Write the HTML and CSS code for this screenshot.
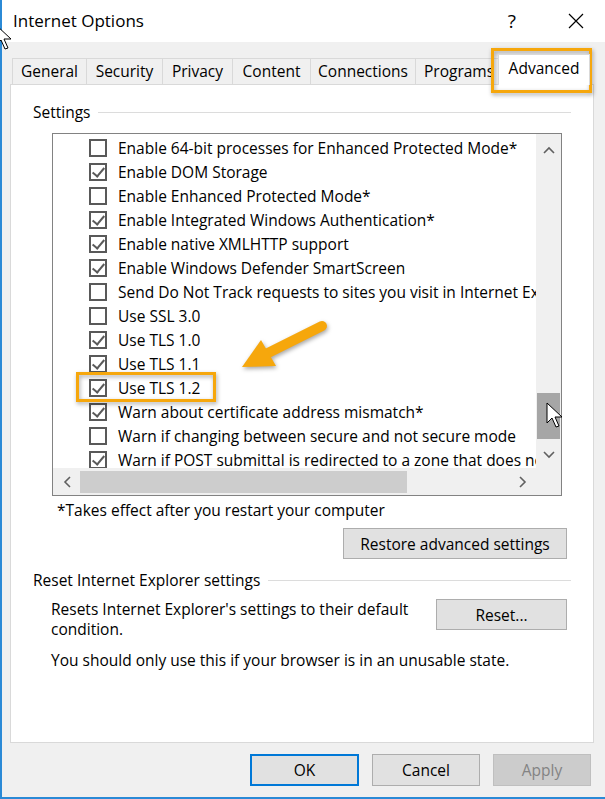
FILE: index.html
```html
<!DOCTYPE html>
<html>
<head lang="en">
    <meta charset="UTF-8">
    <title>Internet Options</title>
    <link rel="stylesheet" href="styles.css">
</head>
<body>
    <div class="window">
        <div class="titlebar">
            <span class="title">Internet Options</span>
            <span class="help">?</span>
            <svg class="close" width="16" height="16" viewBox="0 0 16 16">
                <path d="M1 1 L15 15 M15 1 L1 15" stroke="#000" stroke-width="1.2" fill="none"/>
            </svg>
        </div>

        <div class="tabs">
            <div class="tab tab-general">General</div>
            <div class="tab tab-security">Security</div>
            <div class="tab tab-privacy">Privacy</div>
            <div class="tab tab-content">Content</div>
            <div class="tab tab-connections">Connections</div>
            <div class="tab tab-programs">Programs</div>
            <div class="tab tab-advanced selected">Advanced</div>
        </div>

        <div class="panel">
            <div class="group-head"><span>Settings</span></div>

            <div class="listbox">
                <ul class="items">
                    <li class="item"><span class="check"></span>Enable 64-bit processes for Enhanced Protected Mode*</li>
                    <li class="item"><span class="check on"></span>Enable DOM Storage</li>
                    <li class="item"><span class="check"></span>Enable Enhanced Protected Mode*</li>
                    <li class="item"><span class="check on"></span>Enable Integrated Windows Authentication*</li>
                    <li class="item"><span class="check on"></span>Enable native XMLHTTP support</li>
                    <li class="item"><span class="check on"></span>Enable Windows Defender SmartScreen</li>
                    <li class="item"><span class="check"></span>Send Do Not Track requests to sites you visit in Internet Explorer*</li>
                    <li class="item"><span class="check"></span>Use SSL 3.0</li>
                    <li class="item"><span class="check on"></span>Use TLS 1.0</li>
                    <li class="item"><span class="check on"></span>Use TLS 1.1</li>
                    <li class="item"><span class="check on"></span>Use TLS 1.2</li>
                    <li class="item"><span class="check on"></span>Warn about certificate address mismatch*</li>
                    <li class="item"><span class="check"></span>Warn if changing between secure and not secure mode</li>
                    <li class="item"><span class="check on"></span>Warn if POST submittal is redirected to a zone that does not permit posts</li>
                </ul>
                <div class="vscroll">
                    <div class="sb-btn sb-up">
                        <svg width="12" height="8" viewBox="0 0 12 8"><path d="M1 7 L6 2 L11 7" stroke="#606060" stroke-width="1.6" fill="none"/></svg>
                    </div>
                    <div class="vtrack"><div class="vthumb"></div></div>
                    <div class="sb-btn sb-down">
                        <svg width="12" height="8" viewBox="0 0 12 8"><path d="M1 1 L6 6 L11 1" stroke="#606060" stroke-width="1.6" fill="none"/></svg>
                    </div>
                </div>
                <div class="hscroll">
                    <div class="sb-btn sb-left">
                        <svg width="8" height="12" viewBox="0 0 8 12"><path d="M7 1 L2 6 L7 11" stroke="#606060" stroke-width="1.6" fill="none"/></svg>
                    </div>
                    <div class="htrack"><div class="hthumb"></div></div>
                    <div class="sb-btn sb-right">
                        <svg width="8" height="12" viewBox="0 0 8 12"><path d="M1 1 L6 6 L1 11" stroke="#606060" stroke-width="1.6" fill="none"/></svg>
                    </div>
                </div>
                <div class="corner"></div>
            </div>

            <p class="note">*Takes effect after you restart your computer</p>
            <div class="btn-row">
                <button class="btn btn-restore">Restore advanced settings</button>
            </div>

            <div class="group-head group-reset"><span>Reset Internet Explorer settings</span></div>
            <div class="reset-row">
                <p>Resets Internet Explorer's settings to their default<br>condition.</p>
                <button class="btn btn-reset">Reset...</button>
            </div>
            <p class="warning">You should only use this if your browser is in an unusable state.</p>
        </div>

        <div class="actions">
            <button class="btn btn-ok">OK</button>
            <button class="btn btn-cancel">Cancel</button>
            <button class="btn btn-apply">Apply</button>
        </div>
    </div>

    <svg class="overlay" width="605" height="799" viewBox="0 0 605 799">
        <g class="marks">
            <rect x="492.5" y="49.5" width="98" height="42" fill="none" stroke="#f6a70c" stroke-width="3"/>
            <rect x="77.5" y="373.5" width="137" height="27" fill="none" stroke="#f6a70c" stroke-width="3"/>
            <line x1="322" y1="326" x2="266" y2="354" stroke="#f6a70c" stroke-width="10" stroke-linecap="round"/>
            <polygon points="242,367 261,340 276,366" fill="#f6a70c"/>
        </g>
        <polygon class="cursor" points="-4,25 -4,45 1,40 5,49 8,48 4,39 11,39"/>
        <polygon class="cursor" points="547,403 547,423 552,418 556,427 559,426 555,417 562,417"/>
    </svg>
</body>
</html>
```

FILE: styles.css
```css
*{
    margin: 0;
    padding: 0;
    box-sizing: border-box;
}
body{
    position: relative;
    width: 605px;
    height: 799px;
    overflow: hidden;
    background: #fff;
    font-family: "Open Sans", "Liberation Sans", sans-serif;
    font-size: 15.5px;
    color: #000;
}
ul{
    list-style: none;
}
.window{
    height: 799px;
    border-left: 2px solid #2b8ad6;
    border-bottom: 2px solid #2b8ad6;
    background: #f0f0f0;
}

/* title bar */
.titlebar{
    height: 42px;
    background: #fff;
    display: flex;
    align-items: center;
    padding: 0 21px 0 11px;
}
.title{
    flex: 1;
    font-size: 17px;
    line-height: 20px;
}
.help{
    font-size: 19px;
    line-height: 20px;
    margin-right: 52px;
}

/* tabs */
.tabs{
    height: 30px;
    margin-top: 12px;
    padding-left: 10px;
    display: flex;
    align-items: flex-end;
}
.tab{
    height: 26px;
    line-height: 24px;
    text-align: center;
    white-space: nowrap;
    overflow: hidden;
    border: 1px solid #d9d9d9;
    border-bottom: none;
    margin-left: -1px;
    background: #f0f0f0;
}
.tab:first-child{
    margin-left: 0;
}
.tab-general{ width: 75px; }
.tab-security{ width: 77px; }
.tab-privacy{ width: 71px; }
.tab-content{ width: 79px; }
.tab-connections{ width: 106px; }
.tab-programs{ width: 86px; text-align: left; padding-left: 8px; }
.tab.selected{
    position: relative;
    z-index: 1;
    width: 92px;
    height: 31px;
    line-height: 26px;
    margin-left: -3px;
    margin-bottom: -1px;
    background: #fff;
}

/* panel */
.panel{
    width: 584px;
    height: 659px;
    margin-left: 8px;
    padding: 0 22px;
    border: 1px solid #d9d9d9;
    background: #fff;
}
.group-head{
    height: 20px;
    margin-top: 17px;
    display: flex;
    align-items: center;
    gap: 8px;
    line-height: 20px;
}
.group-head::after{
    content: "";
    flex: 1;
    border-top: 1px solid #dcdcdc;
}
.group-reset{
    margin-top: 11px;
}

/* list */
.listbox{
    width: 510px;
    height: 363px;
    margin: 11px 0 0 19px;
    border: 1px solid #828282;
    display: grid;
    grid-template-columns: 1fr 25px;
    grid-template-rows: 1fr 27px;
    background: #fff;
}
.items{
    overflow: hidden;
    padding: 2px 0 0 36px;
}
.item{
    height: 24px;
    display: flex;
    align-items: center;
    gap: 11px;
    white-space: nowrap;
}
.check{
    flex: none;
    position: relative;
    width: 18px;
    height: 18px;
    border: 2px solid #595959;
    background: #fff;
}
.check.on::after{
    content: "";
    position: absolute;
    left: 4px;
    top: 0;
    width: 5px;
    height: 10px;
    border: solid #5a5a5a;
    border-width: 0 2px 2px 0;
    transform: rotate(40deg);
}

/* scrollbars */
.vscroll,.hscroll,.corner{
    background: #f0f0f0;
}
.vscroll{
    display: flex;
    flex-direction: column;
}
.sb-btn{
    display: flex;
    align-items: center;
    justify-content: center;
}
.sb-up{ height: 32px; }
.sb-down{ height: 26px; }
.vtrack{
    flex: 1;
}
.vthumb{
    width: 23px;
    height: 46px;
    margin: 227px 0 0 1px;
    background: #a6a6a6;
}
.hscroll{
    display: flex;
    align-items: center;
}
.sb-left,.sb-right{
    width: 27px;
    height: 100%;
}
.htrack{
    flex: 1;
}
.hthumb{
    width: 327px;
    height: 22px;
    background: #cdcdcd;
}

/* lower part */
.note{
    margin: 4px 0 0 24px;
    line-height: 20px;
}
.btn-row{
    display: flex;
    justify-content: flex-end;
    margin-top: 8px;
    padding-right: 4px;
}
.btn{
    height: 31px;
    font: inherit;
    color: #000;
    background: #e1e1e1;
    border: 1px solid #adadad;
}
.btn-restore{ width: 224px; }
.reset-row{
    display: flex;
    justify-content: space-between;
    align-items: flex-start;
    margin-top: 9px;
    padding: 0 4px 0 18px;
    line-height: 20px;
}
.btn-reset{ width: 131px; }
.warning{
    margin: 11px 0 0 18px;
    line-height: 20px;
}

/* dialog buttons */
.actions{
    display: flex;
    justify-content: flex-end;
    gap: 13px;
    margin-top: 11px;
    padding-right: 14px;
}
.actions .btn{
    height: 32px;
}
.btn-ok{
    width: 109px;
    border: 2px solid #0078d7;
}
.btn-cancel{ width: 108px; }
.btn-apply{
    width: 98px;
    background: #cccccc;
    border-color: #bfbfbf;
    color: #838383;
}

/* annotations */
.overlay{
    position: absolute;
    left: 0;
    top: 0;
    pointer-events: none;
}
.marks{
    filter: drop-shadow(1px 2px 2px rgba(0,0,0,.35));
}
.cursor{
    fill: #fff;
    stroke: #000;
    stroke-width: 1;
    stroke-linejoin: round;
}
```
